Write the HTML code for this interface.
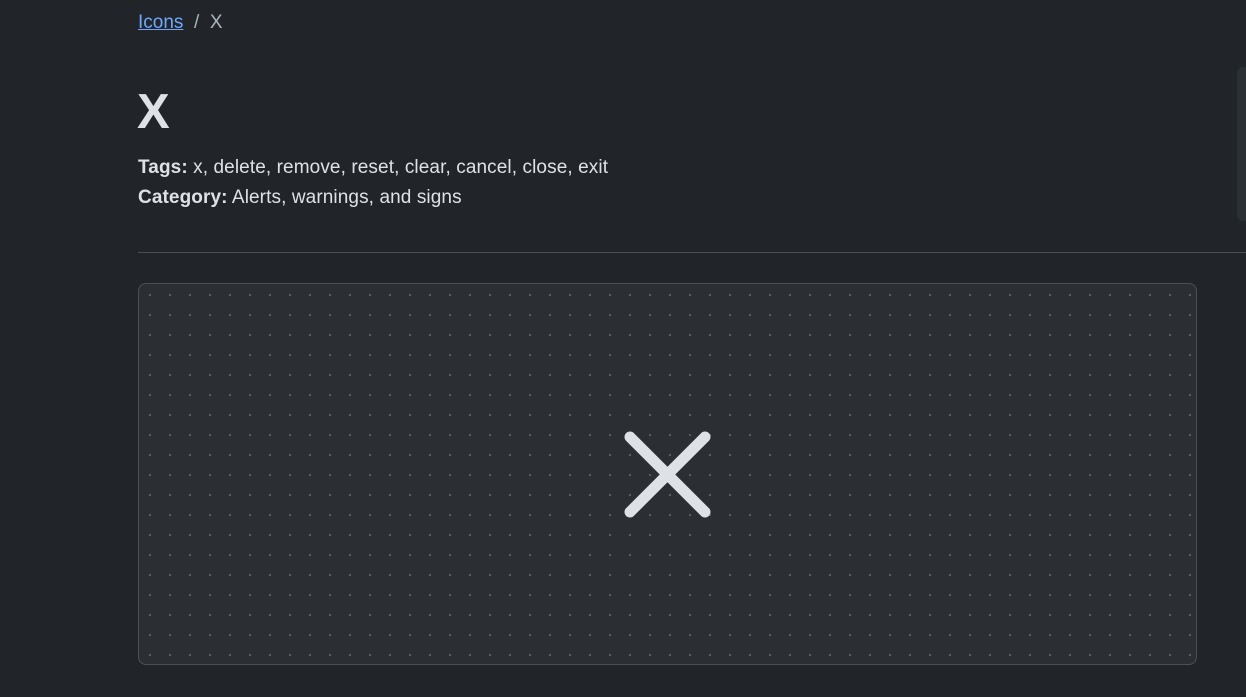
<!DOCTYPE html>
<html><head><style>
html,body{margin:0;padding:0;background:#212529;width:1246px;height:697px;overflow:hidden;font-family:"Liberation Sans",sans-serif;color:#dee2e6}
.bc{position:absolute;left:138px;top:12px;font-size:19px;color:#adb5bd}
.bc a{color:#6ea8fe;text-decoration:underline}
h1{position:absolute;left:137px;top:84px;margin:0;font-size:49px;font-weight:bold;color:#dee2e6;line-height:56px}
.meta{position:absolute;left:138px;top:153px;font-size:19px;line-height:30px;color:#dee2e6;letter-spacing:0.1px}
.meta b{font-weight:bold}
hr{position:absolute;left:138px;top:252px;width:1108px;margin:0;border:0;border-top:1px solid #495057}
.side{position:absolute;left:1237px;top:67px;width:20px;height:154px;background:#2b3035;border-radius:6px}
.box{position:absolute;left:138px;top:283px;width:1057px;height:380px;border:1px solid #495057;border-radius:8px;background-color:#2b2f34;
background-image:radial-gradient(circle,#5e646b 0.9px,transparent 1.2px);background-size:20px 20px;background-position:1px 1px}
svg{position:absolute;left:620px;top:427px}
</style></head><body>
<div class="bc"><a>Icons</a>&nbsp; / &nbsp;X</div>
<h1>X</h1>
<div class="meta"><b>Tags:</b> x, delete, remove, reset, clear, cancel, close, exit<br><b>Category:</b> Alerts, warnings, and signs</div>
<hr>
<div class="side"></div>
<div class="box"></div>
<svg width="95" height="95" viewBox="0 0 95 95"><path d="M10 10 L85 85 M85 10 L10 85" stroke="#dee2e6" stroke-width="11" stroke-linecap="round" fill="none"/></svg>
</body></html>
